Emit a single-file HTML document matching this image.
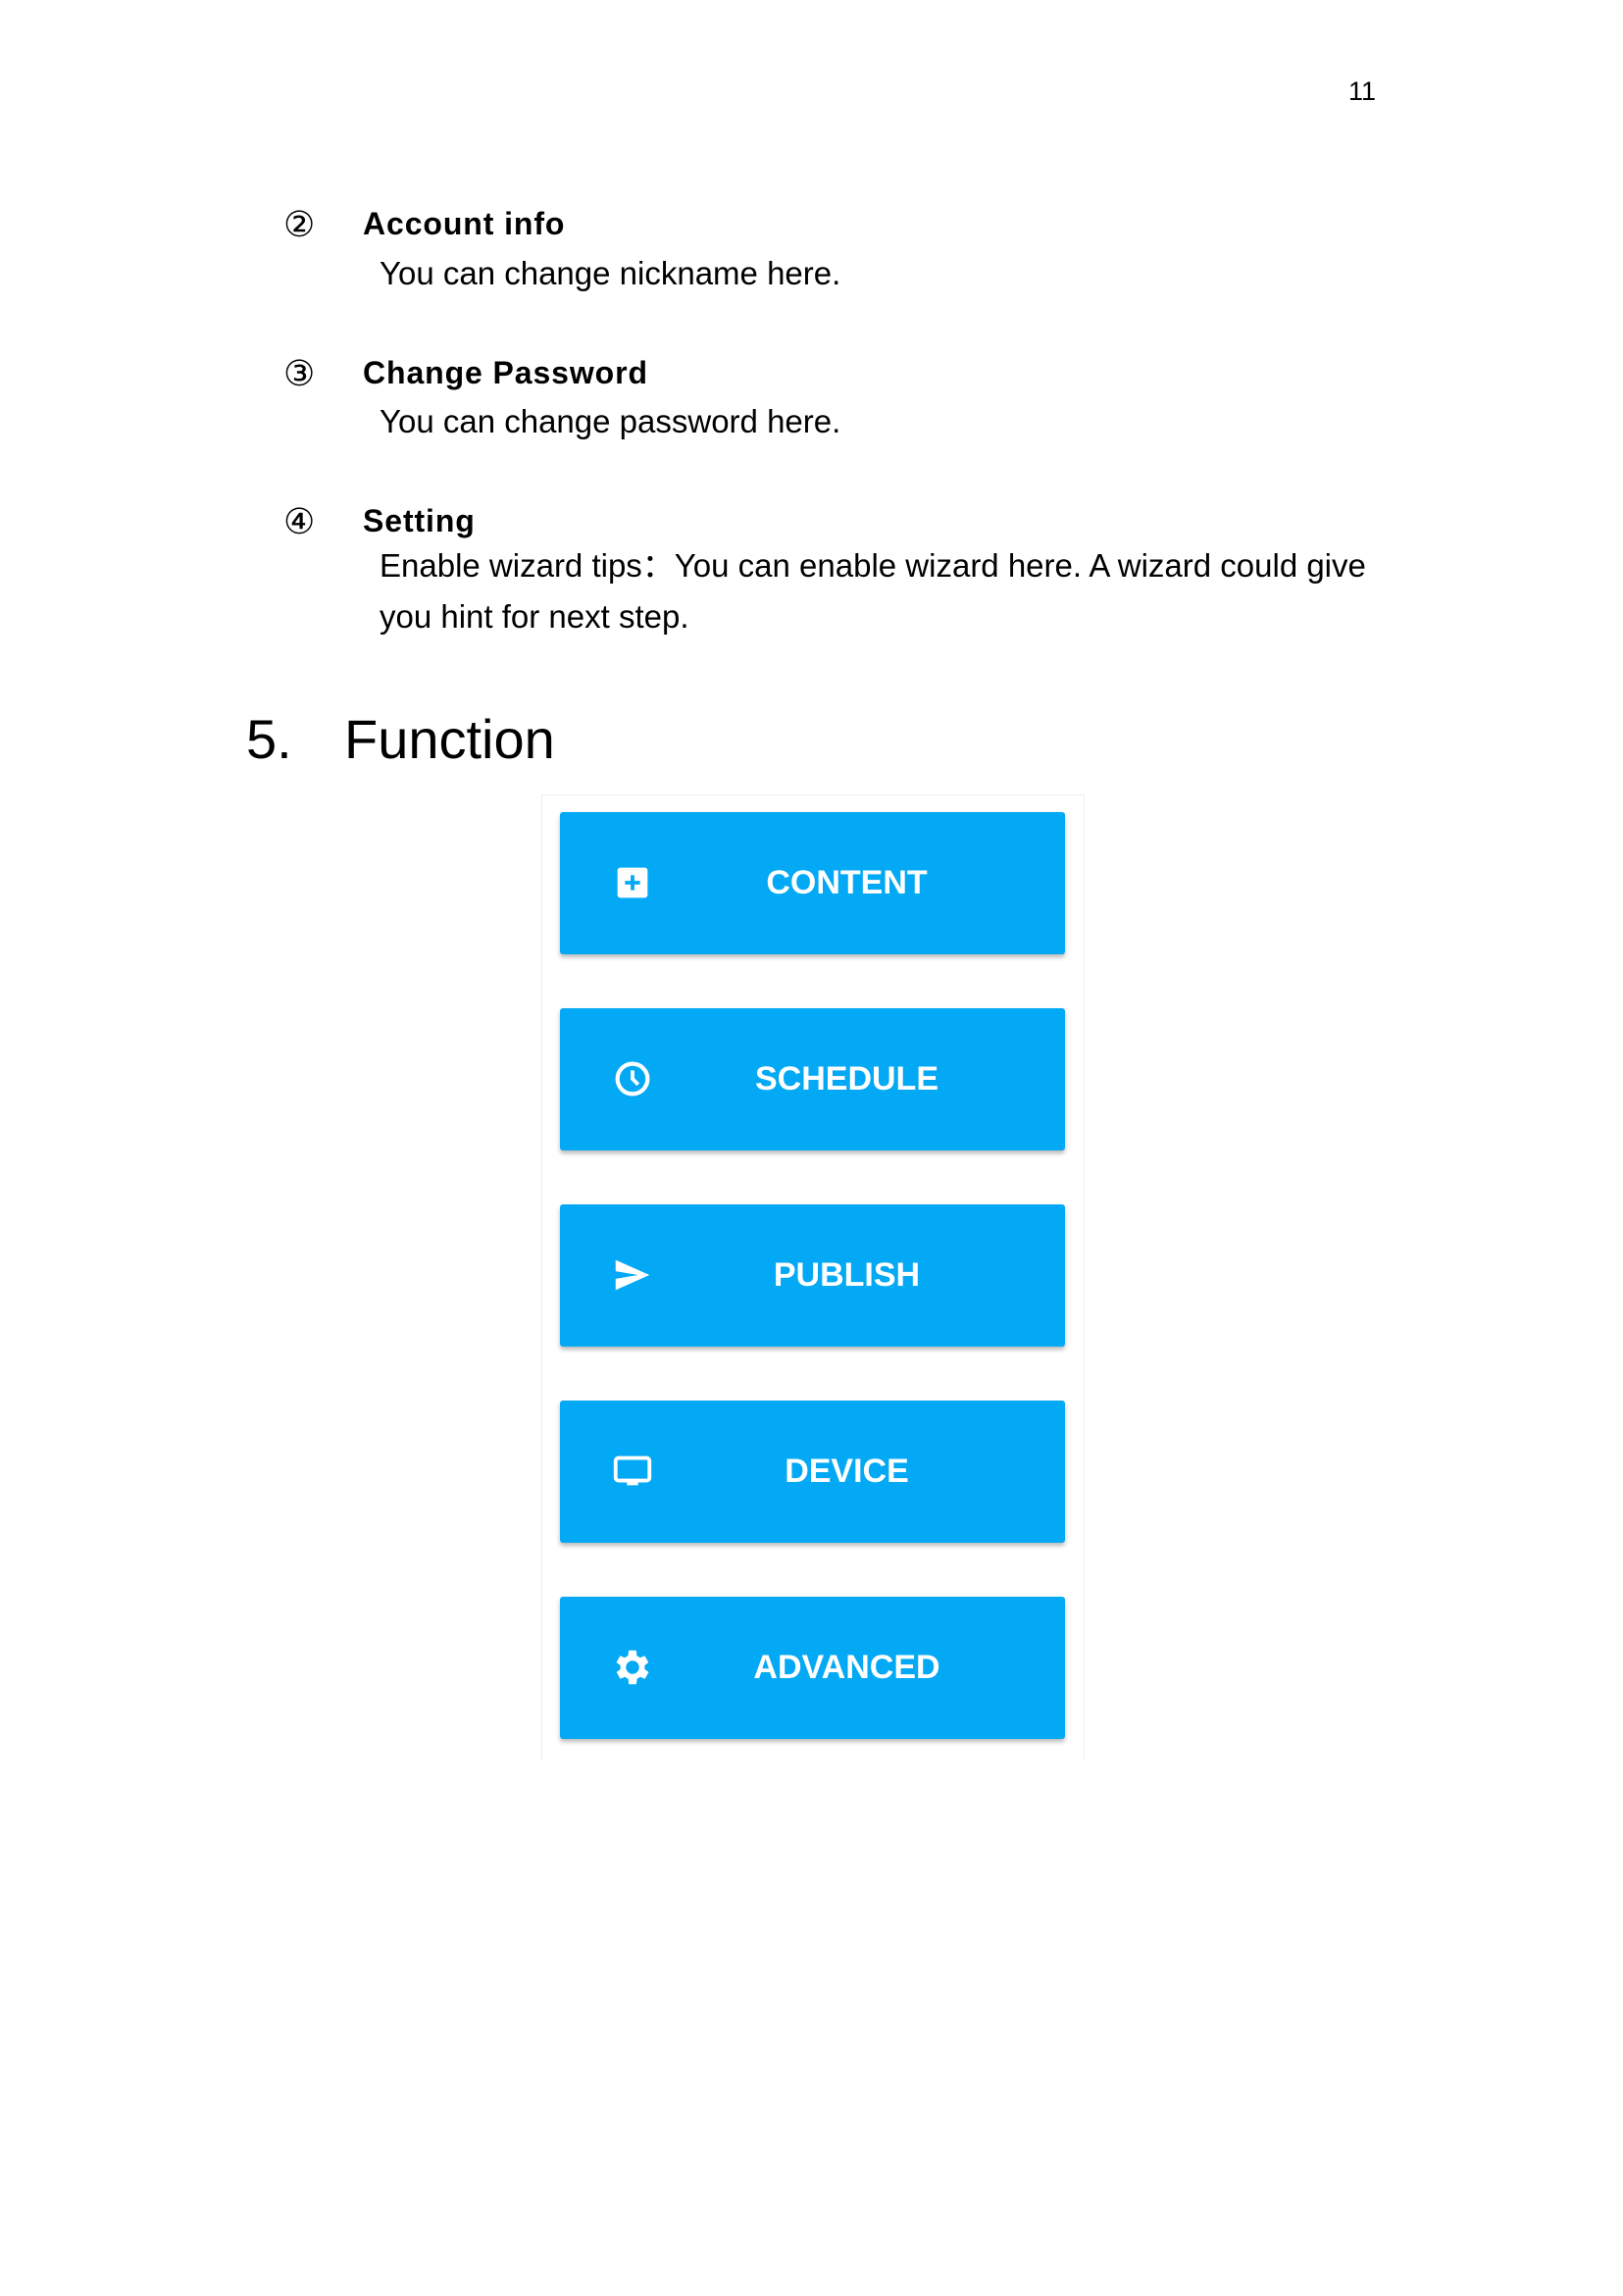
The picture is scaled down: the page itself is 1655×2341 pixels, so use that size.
<!DOCTYPE html>
<html><head><meta charset="utf-8"><style>
html,body{margin:0;padding:0;background:#fff;}
body{width:1655px;height:2341px;position:relative;overflow:hidden;font-family:"Liberation Sans",Arial,sans-serif;color:#000;}
.a{position:absolute;white-space:nowrap;}
.num{font-size:36px;left:289px;}
.h{font-size:32px;font-weight:bold;left:370px;letter-spacing:0.9px;}
.b{font-size:33px;left:387px;}
.box{position:absolute;left:552px;top:810px;width:552px;height:983px;border:1px solid #eee;border-bottom:none;background:#fff;}
.btn{position:absolute;left:571px;width:515px;height:145px;background:#03A9F4;border-radius:3px;box-shadow:0 3px 5px rgba(0,0,0,0.28);}
.btn span{position:absolute;left:0;right:0;top:0;line-height:145px;text-align:center;padding-left:70px;color:#fff;font-size:34px;font-weight:bold;}
.btn .ic{position:absolute;left:51px;top:49px;width:46px;height:46px;}
</style></head><body>
<div class="a" style="left:1375px;top:78px;font-size:27px;">11</div>

<div class="a num" style="top:208px;">②</div>
<div class="a h" style="top:210px;">Account info</div>
<div class="a b" style="top:260px;">You can change nickname here.</div>

<div class="a num" style="top:360px;">③</div>
<div class="a h" style="top:362px;">Change Password</div>
<div class="a b" style="top:411px;">You can change password here.</div>

<div class="a num" style="top:511px;">④</div>
<div class="a h" style="top:513px;">Setting</div>
<div class="a b" style="top:550px;">Enable wizard tips：You can enable wizard here. A wizard could give</div>
<div class="a b" style="top:610px;">you hint for next step.</div>

<div class="a" style="left:251px;top:721px;font-size:56px;">5.</div>
<div class="a" style="left:351px;top:721px;font-size:56px;">Function</div>

<div class="box"></div>

<div class="btn" style="top:828px;">
<svg class="ic" viewBox="0 0 24 24"><rect x="4" y="4" width="16" height="16" rx="1.5" fill="#fff"/><path d="M12 8v8M8 12h8" stroke="#03A9F4" stroke-width="2"/></svg>
<span>CONTENT</span></div>

<div class="btn" style="top:1028px;">
<svg class="ic" viewBox="0 0 24 24"><circle cx="12" cy="12" r="8" fill="none" stroke="#fff" stroke-width="2.2"/><path d="M12 7.5V12l3 3" fill="none" stroke="#fff" stroke-width="2"/></svg>
<span>SCHEDULE</span></div>

<div class="btn" style="top:1228px;">
<svg class="ic" viewBox="0 0 24 24"><path d="M3 4l18 8-18 8v-6l12-2-12-2z" fill="#fff"/></svg>
<span>PUBLISH</span></div>

<div class="btn" style="top:1428px;">
<svg class="ic" viewBox="0 0 24 24"><rect x="3" y="5" width="18" height="12" rx="1.5" fill="none" stroke="#fff" stroke-width="2"/><rect x="9" y="17" width="6" height="2.5" fill="#fff"/></svg>
<span>DEVICE</span></div>

<div class="btn" style="top:1628px;">
<svg class="ic" viewBox="0 0 24 24"><path fill="#fff" fill-rule="evenodd" d="M19.4 13a7.5 7.5 0 0 0 0-2l2.1-1.6-2-3.5-2.5 1a7 7 0 0 0-1.7-1L15 3h-4l-.4 2.9a7 7 0 0 0-1.7 1l-2.5-1-2 3.5L6.6 11a7.5 7.5 0 0 0 0 2l-2.1 1.6 2 3.5 2.5-1a7 7 0 0 0 1.7 1L11 21h4l.4-2.9a7 7 0 0 0 1.7-1l2.5 1 2-3.5zM13 15.5a3.5 3.5 0 1 1 0-7 3.5 3.5 0 0 1 0 7z" transform="translate(-1 0)"/></svg>
<span>ADVANCED</span></div>
</body></html>
